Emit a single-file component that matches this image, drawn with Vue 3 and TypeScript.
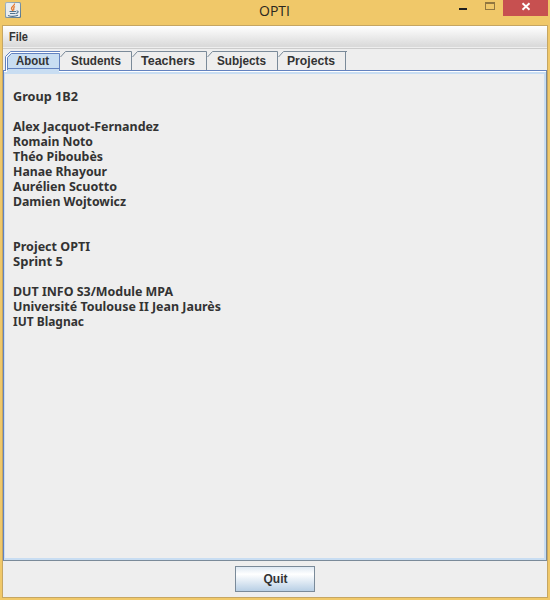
<script setup lang="ts">
interface Line { text: string; width?: number }

const tabs: { label: string; width: number; textWidth: number }[] = [
  { label: 'About', width: 55, textWidth: 33 },
  { label: 'Students', width: 71, textWidth: 50 },
  { label: 'Teachers', width: 74, textWidth: 54 },
  { label: 'Subjects', width: 72, textWidth: 49 },
  { label: 'Projects', width: 68, textWidth: 48 },
]

const lines: Line[] = [
  { text: 'Group 1B2', width: 65 },
  { text: '' },
  { text: 'Alex Jacquot-Fernandez', width: 146 },
  { text: 'Romain Noto', width: 80 },
  { text: 'Théo Piboubès', width: 90 },
  { text: 'Hanae Rhayour', width: 94 },
  { text: 'Aurélien Scuotto', width: 104 },
  { text: 'Damien Wojtowicz', width: 113 },
  { text: '' },
  { text: '' },
  { text: 'Project OPTI', width: 77 },
  { text: 'Sprint 5', width: 50 },
  { text: '' },
  { text: 'DUT INFO S3/Module MPA', width: 160 },
  { text: 'Université Toulouse II Jean Jaurès', width: 208 },
  { text: 'IUT Blagnac', width: 71 },
]
</script>

<template>
  <div class="window">
    <header class="titlebar">
      <svg class="java" width="16" height="16" viewBox="0 0 16 16">
        <defs>
          <linearGradient id="ic" x1="0" y1="0" x2="1" y2="1">
            <stop offset="0" stop-color="#a9bac6" />
            <stop offset="1" stop-color="#53748c" />
          </linearGradient>
        </defs>
        <rect width="16" height="16" rx="1.5" fill="url(#ic)" />
        <rect x="1" y="1" width="14" height="14" rx="1" fill="#e9edf0" />
        <path d="M9.500 1.500C10 4 6 4.500 6.500 6.500C6.700 7.500 7.500 7.700 7.500 9M10 4.500C7.500 5.500 9.500 6.500 8.500 8.500" fill="none" stroke="#e5782f" stroke-width="1.300" />
        <path d="M4.500 9.500H11M11.500 9C14 8.500 13.500 11 11 11.500M5 11.500H10.500M3 13.500C6 14.600 10 14.600 13 13.300" fill="none" stroke="#52748f" stroke-width="1.100" />
      </svg>
      <h1 class="title">OPTI</h1>
      <div class="controls">
        <svg width="110" height="16" viewBox="0 0 110 16" shape-rendering="crispEdges">
          <rect x="21" y="8" width="8" height="2" fill="#1e1e1e" />
          <path d="M47 2h10v8h-10zM48 4v5h8v-5z" fill="#917740" fill-rule="evenodd" />
          <rect x="65" width="45" height="16" fill="#c75050" />
          <path d="M84.500 3.300L91.500 9.700M91.500 3.300L84.500 9.700" stroke="#fff" stroke-width="1.900" shape-rendering="auto" />
        </svg>
      </div>
    </header>

    <div class="frame">
      <nav class="menubar">
        <svg width="30" height="21"><text x="0" y="15" textLength="19" lengthAdjust="spacingAndGlyphs">File</text></svg>
      </nav>
      <div class="tabstrip">
        <svg class="edges" width="350" height="22" viewBox="0 0 350 22">
          <path d="M4 22V5.500L9.500 0.500H57V19H56V22" fill="#c8ddf2" />
          <path d="M2.500 19V5.500L7.500 0.500H57" fill="none" stroke="#6382bf" />
          <path d="M3.500 20V6L8 1.500H57" fill="none" stroke="#fff" />
          <path d="M4.500 19V6.500L8.500 2.500H56.500V20M5 17.500H57" fill="none" stroke="#6382bf" />
          <path d="M57.500 6L62.500 0.500H128.500V19M129.500 6L134.500 0.500H203.500V19M204.500 6L209.500 0.500H274.500V19M275.500 6L280.500 0.500H344M342.500 1V19" fill="none" stroke="#7a8a99" />
        </svg>
        <div v-for="t in tabs" :key="t.label" class="tab" :style="{ width: t.width + 'px' }">
          <svg :width="t.textWidth" height="18">
            <text x="0" y="13" :textLength="t.textWidth" lengthAdjust="spacingAndGlyphs">{{ t.label }}</text>
          </svg>
        </div>
      </div>
      <main class="panel">
        <div v-for="(l, i) in lines" :key="i" class="line">
          <svg v-if="l.width" width="300" height="15">
            <text x="0" y="12" :textLength="l.width" lengthAdjust="spacingAndGlyphs">{{ l.text }}</text>
          </svg>
        </div>
      </main>
      <footer class="footer">
        <button class="quit" type="button">Quit</button>
      </footer>
    </div>
  </div>
</template>

<style>
body { margin: 0; }
</style>

<style scoped>
.window {
  box-sizing: border-box;
  width: 550px;
  height: 600px;
  padding: 0 2px 2px;
  background: #f0c869;
  font-family: "Liberation Sans", sans-serif;
  font-size: 12px;
  font-weight: bold;
  color: #333;
  overflow: hidden;
}
.titlebar {
  display: grid;
  grid-template-columns: 110px 1fr 110px;
  height: 25px;
}
.java { margin: 2px 0 0 3px; }
.title {
  margin: 0;
  padding: 1px 1px 0 0;
  font: 400 14px/20px "Open Sans", sans-serif;
  color: #2b2620;
  text-align: center;
  letter-spacing: 0;
}
.controls { height: 16px; }
.controls svg { display: block; }
.frame {
  box-sizing: border-box;
  display: flex;
  flex-direction: column;
  height: 573px;
  border: 1px solid #c6a662;
  background: #eee;
}
.menubar {
  box-sizing: border-box;
  height: 23px;
  padding-left: 6px;
  background: linear-gradient(#fff, #dadada 20px, #dadada 21px, #eee 21px, #eee 22px, #ccc 22px);
}
.menubar svg { display: block; }
.tabstrip {
  position: relative;
  display: flex;
  height: 19px;
  margin-top: 2px;
  padding-left: 2px;
}
.edges { position: absolute; left: 0; top: 0; }
.tab {
  position: relative;
  display: flex;
  justify-content: center;
  padding-top: 1px;
  box-sizing: border-box;
}
.tab svg { display: block; overflow: visible; }
text { fill: #333; }
.panel {
  box-sizing: border-box;
  height: 491px;
  padding: 18px 0 0 9px;
  border: 1px solid #6382bf;
  border-right-color: #7a8a99;
  border-bottom-color: #7a8a99;
  box-shadow: inset 0 1px #fff, inset 1px 3px #c8ddf2, inset -2px -2px #c8ddf2;
  font: 700 11.8px/15px "Noto Sans", sans-serif;
}
.line { height: 15px; }
.line svg { display: block; overflow: visible; }
.footer { display: flex; justify-content: center; padding: 5px 0 0 0; }
.quit {
  box-sizing: border-box;
  width: 80px;
  height: 26px;
  padding: 0 0 0 1px;
  border: 1px solid #7a8a99;
  background: linear-gradient(#dfe9f3, #fff 30%, #b8cfe5);
  font: inherit;
  color: #333;
}
</style>
